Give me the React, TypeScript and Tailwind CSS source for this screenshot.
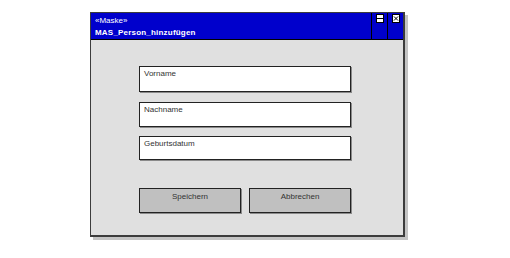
export default function App() {
  const fields = [
    { label: "Vorname", h: "h-[26px]", mt: "mt-0" },
    { label: "Nachname", h: "h-[25px]", mt: "mt-[10px]" },
    { label: "Geburtsdatum", h: "h-[24px]", mt: "mt-[9px]" },
  ];

  return (
    <div
      className="min-h-[258px] w-[510px] bg-white pl-[90px] pt-[12px]"
      style={{ fontFamily: '"Liberation Sans", Arial, sans-serif' }}
    >
      <div className="flex w-[315px] flex-col border-l border-t border-r-2 border-b-2 border-[#3c3c3c] bg-[#e0e0e0] shadow-[3px_3px_0_#c4c4c4]">
        {/* title bar */}
        <div className="flex h-[27px] border-b border-black bg-[#0000cc]">
          <div className="flex-1 pl-[4px] pt-[3px] text-white">
            <div className="text-[8px] leading-[10px]">«Maske»</div>
            <div className="mt-[1px] text-[8px] font-bold leading-[11px] tracking-[0.2px]">
              MAS_Person_hinzufügen
            </div>
          </div>
          <div className="flex w-[16px] justify-center border-l border-black pt-[1px]">
            <svg width="8" height="9" viewBox="0 0 8 9">
              <rect x="0.5" y="0.5" width="7" height="8" fill="#fff" stroke="#000" />
              <line x1="0" y1="4.5" x2="8" y2="4.5" stroke="#000" />
            </svg>
          </div>
          <div className="flex w-[16px] justify-center border-l border-black pt-[1px]">
            <svg width="8" height="9" viewBox="0 0 8 9">
              <rect x="0.5" y="0.5" width="7" height="8" fill="#fff" stroke="#000" />
              <path d="M2 2.5 L6 6.5 M6 2.5 L2 6.5" stroke="#000" />
            </svg>
          </div>
        </div>

        {/* form body */}
        <div className="flex flex-col pl-[48px] pt-[26px] pb-[22px]">
          {fields.map((f) => (
            <div
              key={f.label}
              className={`${f.h} ${f.mt} w-[212px] border border-[#222] bg-white pl-[4px] pt-[2px] text-[8px] leading-[10px] text-[#333] shadow-[1px_1px_0_#8a8a8a]`}
            >
              {f.label}
            </div>
          ))}

          <div className="mt-[28px] flex gap-[8px]">
            {["Speichern", "Abbrechen"].map((b) => (
              <div
                key={b}
                className="h-[25px] w-[102px] border border-[#222] bg-[#c0c0c0] pt-[3px] text-center text-[8px] leading-[10px] text-[#333] shadow-[1px_1px_0_#8a8a8a]"
              >
                {b}
              </div>
            ))}
          </div>
        </div>
      </div>
    </div>
  );
}
